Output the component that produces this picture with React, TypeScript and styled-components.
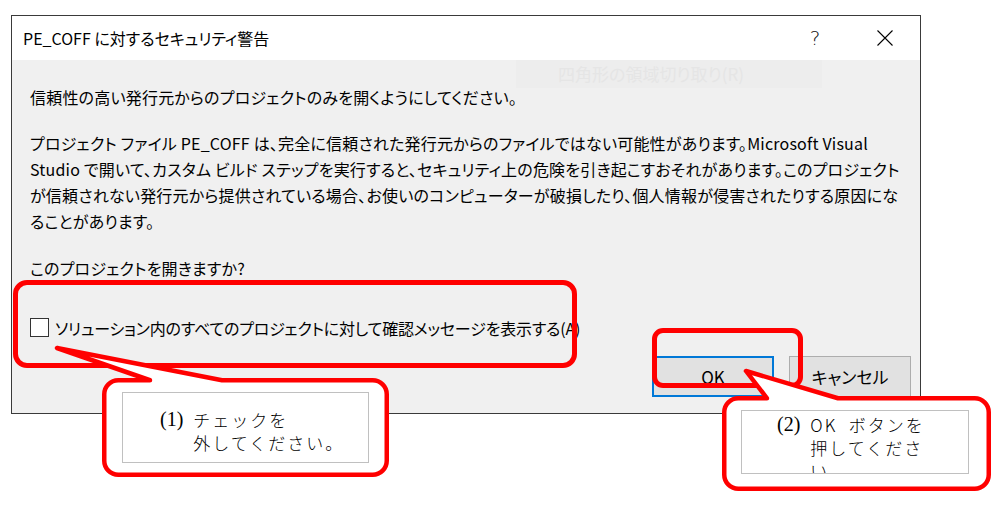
import React from "react";
import styled, { createGlobalStyle } from "styled-components";

const Global = createGlobalStyle`
  html, body { margin: 0; padding: 0; background: #fff; }
  body { font-family: "Noto Sans CJK JP", "Noto Sans", sans-serif; color: #000; }
`;

const Page = styled.div`
  position: relative;
  width: 1002px;
  height: 505px;
  overflow: hidden;
  background: #fff;
  padding: 15px 0 0 11px;
  box-sizing: border-box;
`;

const Dialog = styled.div`
  width: 910px;
  height: 399px;
  box-sizing: border-box;
  border: 1px solid #3a3a3a;
  display: flex;
  flex-direction: column;
  background: #f0f0f0;
`;

const TitleBar = styled.div`
  height: 44px;
  flex-shrink: 0;
  background: #fff;
  display: flex;
  align-items: center;
  padding-left: 11px;
`;

const TitleText = styled.div`
  font-size: 16px;
  font-feature-settings: "palt";
  line-height: 20px;
  white-space: nowrap;
`;

const TitleButtons = styled.div`
  margin-left: auto;
  display: flex;
  height: 100%;
`;

const TitleButton = styled.div`
  width: 70px;
  height: 100%;
  display: flex;
  align-items: center;
  justify-content: center;
  font-family: "DejaVu Sans", sans-serif;
  font-weight: 200;
  font-size: 20px;
  color: #111;
`;

const Body = styled.div`
  flex: 1;
  display: flex;
  flex-direction: column;
  padding: 24px 9px 16px 18px;
  font-size: 16px;
  letter-spacing: 0.2px;
  font-feature-settings: "palt";
  line-height: 26px;
`;

const Line = styled.div<{ $gap?: number }>`
  white-space: nowrap;
  margin-top: ${(p) => p.$gap ?? 0}px;
`;

const CheckRow = styled.label`
  display: flex;
  align-items: center;
  gap: 6px;
  margin-top: 37px;
  height: 19px;
  white-space: nowrap;
  letter-spacing: -0.2px;
`;

const CheckBox = styled.span`
  width: 19px;
  height: 19px;
  box-sizing: border-box;
  border: 1px solid #333;
  background: #fff;
  flex-shrink: 0;
`;

const Buttons = styled.div`
  margin-top: auto;
  display: flex;
  justify-content: flex-end;
  gap: 15px;
`;

const Button = styled.div<{ $primary?: boolean }>`
  width: 122px;
  height: 41px;
  box-sizing: border-box;
  border: ${(p) => (p.$primary ? "2px solid #0078d7" : "1px solid #adadad")};
  background: #e1e1e1;
  display: flex;
  align-items: center;
  justify-content: center;
  font-size: 17px;
  letter-spacing: 0;
`;

const Ghost = styled.div`
  position: absolute;
  left: 516px;
  top: 60px;
  width: 306px;
  height: 28px;
  background: #ededed;
  color: #e5e5e5;
  font-size: 17px;
  font-feature-settings: "palt";
  line-height: 28px;
  padding-left: 42px;
  box-sizing: border-box;
  white-space: nowrap;
`;

const Frame = styled.div<{ $left: number; $top: number; $w: number; $h: number; $r: number }>`
  position: absolute;
  left: ${(p) => p.$left}px;
  top: ${(p) => p.$top}px;
  width: ${(p) => p.$w}px;
  height: ${(p) => p.$h}px;
  box-sizing: border-box;
  border: 5px solid #ff0000;
  border-radius: ${(p) => p.$r}px;
`;

const Note = styled.div<{ $left: number; $top: number; $w: number; $h: number; $pad: string }>`
  position: absolute;
  left: ${(p) => p.$left}px;
  top: ${(p) => p.$top}px;
  width: ${(p) => p.$w}px;
  height: ${(p) => p.$h}px;
  box-sizing: border-box;
  padding: ${(p) => p.$pad};
`;

const NoteShape = styled.svg`
  position: absolute;
  left: 0;
  top: 0;
  overflow: visible;
`;

const NoteBox = styled.div<{ $padTop: number; $padLeft: number }>`
  position: relative;
  height: 100%;
  box-sizing: border-box;
  border: 1px solid #c0c0c0;
  background: #fff;
  overflow: hidden;
  display: flex;
  align-items: flex-start;
  padding: ${(p) => p.$padTop}px 0 0 ${(p) => p.$padLeft}px;
`;

const NoteNum = styled.span`
  font-family: "Liberation Serif", serif;
  font-size: 20px;
  line-height: 23px;
  margin-right: 10px;
  white-space: nowrap;
`;

const NoteLines = styled.div`
  font-family: "Noto Sans CJK JP", sans-serif;
  font-weight: 300;
  font-size: 17px;
  letter-spacing: 2px;
  line-height: 23px;
  white-space: nowrap;
`;

function calloutPath(w: number, h: number, r: number, s: number, bx1: number, bx2: number, tx: number, ty: number) {
  const i = s / 2;
  const L = i, T = i, R = w - i, B = h - i;
  return `M ${L + r} ${T} L ${bx1} ${T} L ${tx} ${ty} L ${bx2} ${T} L ${R - r} ${T} A ${r} ${r} 0 0 1 ${R} ${T + r} L ${R} ${B - r} A ${r} ${r} 0 0 1 ${R - r} ${B} L ${L + r} ${B} A ${r} ${r} 0 0 1 ${L} ${B - r} L ${L} ${T + r} A ${r} ${r} 0 0 1 ${L + r} ${T} Z`;
}

type CalloutProps = {
  left: number;
  top: number;
  w: number;
  h: number;
  pad: string;
  base: [number, number];
  tip: [number, number];
  padTop: number;
  padLeft: number;
  num: string;
  lines: string[];
};

function Callout(p: CalloutProps) {
  return (
    <Note $left={p.left} $top={p.top} $w={p.w} $h={p.h} $pad={p.pad}>
      <NoteShape width={p.w} height={p.h}>
        <path
          d={calloutPath(p.w, p.h, 14, 4.5, p.base[0], p.base[1], p.tip[0], p.tip[1])}
          fill="#fff"
          stroke="#ff0000"
          strokeWidth={4.5}
          strokeLinejoin="round"
        />
      </NoteShape>
      <NoteBox $padTop={p.padTop} $padLeft={p.padLeft}>
        <NoteNum>{p.num}</NoteNum>
        <NoteLines>
          {p.lines.map((l, i) => (
            <div key={i}>{l}</div>
          ))}
        </NoteLines>
      </NoteBox>
    </Note>
  );
}

export default function App() {
  return (
    <Page>
      <Global />
      <Dialog>
        <TitleBar>
          <TitleText>PE_COFF に対するセキュリティ警告</TitleText>
          <TitleButtons>
            <TitleButton>?</TitleButton>
            <TitleButton>
              <svg width="16" height="16" viewBox="0 0 16 16">
                <path d="M0.5 0.5 L15.5 15.5 M15.5 0.5 L0.5 15.5" stroke="#000" strokeWidth="1.1" fill="none" />
              </svg>
            </TitleButton>
          </TitleButtons>
        </TitleBar>
        <Body>
          <Line>信頼性の高い発行元からのプロジェクトのみを開くようにしてください。</Line>
          <Line $gap={20}>
            プロジェクト ファイル PE_COFF は、完全に信頼された発行元からのファイルではない可能性があります。Microsoft Visual
          </Line>
          <Line>
            Studio で開いて、カスタム ビルド ステップを実行すると、セキュリティ上の危険を引き起こすおそれがあります。このプロジェクト
          </Line>
          <Line>
            が信頼されない発行元から提供されている場合、お使いのコンピューターが破損したり、個人情報が侵害されたりする原因にな
          </Line>
          <Line>ることがあります。</Line>
          <Line $gap={21}>このプロジェクトを開きますか?</Line>
          <CheckRow>
            <CheckBox />
            ソリューション内のすべてのプロジェクトに対して確認メッセージを表示する(A)
          </CheckRow>
          <Buttons>
            <Button $primary>OK</Button>
            <Button>キャンセル</Button>
          </Buttons>
        </Body>
      </Dialog>

      <Ghost>四角形の領域切り取り(R)</Ghost>

      <Frame $left={13} $top={280} $w={564} $h={88} $r={14} />
      <Frame $left={652} $top={328} $w={151} $h={60} $r={11} />

      <Callout
        left={102}
        top={378}
        w={287}
        h={99}
        pad="14px 20px 14px 20px"
        base={[48, 120]}
        tip={[-45, -30]}
        padTop={15}
        padLeft={37}
        num="(1)"
        lines={["チェックを", "外してください。"]}
      />
      <Callout
        left={722}
        top={396}
        w={269}
        h={95}
        pad="14px 22px 17px 19px"
        base={[45, 116]}
        tip={[24, -25]}
        padTop={2}
        padLeft={35}
        num="(2)"
        lines={["OK\u00a0 ボタンを", "押してくださ", "い。"]}
      />
    </Page>
  );
}
